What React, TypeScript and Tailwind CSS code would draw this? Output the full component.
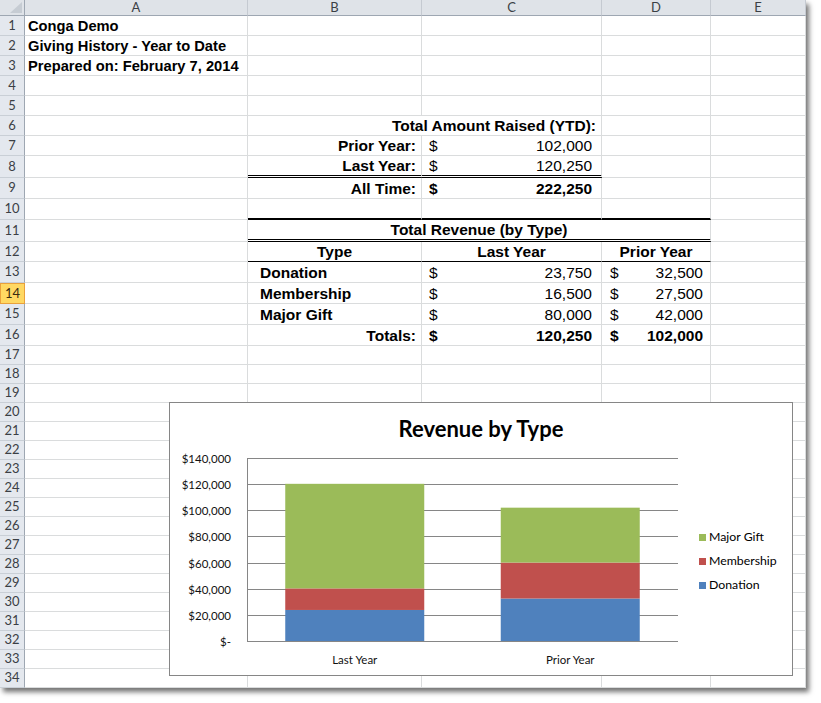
import React from "react";

// column widths (each includes its own 1px right gridline)
const W = {
  A: "w-[223px]",
  B: "w-[174px]",
  C: "w-[180px]",
  D: "w-[109px]",
  E: "w-[95px]",
  BC: "w-[354px]",
  BD: "w-[463px]",
};

const Cell: React.FC<{ w: string; className?: string; children?: React.ReactNode }> = ({
  w,
  className = "",
  children,
}) => (
  <div
    className={`${w} shrink-0 box-border h-full border-r border-b border-[#dadcdd] flex items-end pb-[1px] leading-[16px] whitespace-nowrap ${className}`}
  >
    {children}
  </div>
);

const Row: React.FC<{ n: number; h: string; active?: boolean; children?: React.ReactNode }> = ({
  n,
  h,
  active,
  children,
}) => (
  <div className={`flex ${h}`}>
    <div
      className={`w-[25px] shrink-0 h-full box-border flex items-center justify-center font-['Lato',sans-serif] text-[13px] ${
        active
          ? "bg-[#ffd862] border border-[#e9a13b] text-[#3a2a10]"
          : "bg-[#e4e8ee] border-r border-b border-r-[#9ea7b2] border-b-[#c9cfd6] text-[#3b3f45]"
      }`}
    >
      {n}
    </div>
    {children ?? (
      <>
        <Cell w={W.A} />
        <Cell w={W.B} />
        <Cell w={W.C} />
        <Cell w={W.D} />
        <Cell w={W.E} />
      </>
    )}
  </div>
);

// accounting-format cell: "$" on the left, figure on the right
const Money: React.FC<{ w: string; value: string; bold?: boolean; className?: string; pad?: string }> = ({
  w,
  value,
  bold,
  className = "",
  pad = "pl-[7px] pr-[9px]",
}) => (
  <Cell w={w} className={`justify-between ${pad} ${bold ? "font-bold" : ""} ${className}`}>
    <span>$</span>
    <span>{value}</span>
  </Cell>
);

const revenue = [
  { name: "Donation", color: "#4f81bd", last: 23750, prior: 32500 },
  { name: "Membership", color: "#c0504d", last: 16500, prior: 27500 },
  { name: "Major Gift", color: "#9bbb59", last: 80000, prior: 42000 },
];

const yLabels = ["$140,000", "$120,000", "$100,000", "$80,000", "$60,000", "$40,000", "$20,000", "$-"];

const Chart: React.FC = () => {
  const base = 192;
  const top = 9;
  const max = 140000;
  const scale = (base - top) / max;
  const left = 77;
  const right = 508;
  const catW = (right - left) / 2;
  const barW = 139;
  const cats: Array<"last" | "prior"> = ["last", "prior"];

  return (
    <div className="absolute left-[169px] top-[402px] w-[624px] h-[274px] border border-[#868686] bg-white flex flex-col font-['Lato',sans-serif] text-black">
      <div className="h-[46px] pt-[5px] flex items-center justify-center text-[22px] font-bold">
        Revenue by Type
      </div>
      <div className="flex flex-1">
        <svg width="520" height="226" className="shrink-0">
          {yLabels.map((label, i) => {
            const y = Math.round(top + (i * (base - top)) / 7) + 0.5;
            return (
              <g key={label}>
                <line x1={left} x2={right} y1={y} y2={y} stroke="#868686" strokeWidth="1" />
                <text x="61" y={y + 4} textAnchor="end" fontSize="11.5" fill="#111">
                  {label}
                </text>
              </g>
            );
          })}
          <line x1={left + 0.5} x2={left + 0.5} y1={top} y2={base + 1} stroke="#868686" strokeWidth="1" />
          {cats.map((c, ci) => {
            const x = left + catW * ci + (catW - barW) / 2;
            let acc = 0;
            return (
              <g key={c}>
                {revenue.map((r) => {
                  const h = r[c] * scale;
                  const y = base - (acc + r[c]) * scale;
                  acc += r[c];
                  return <rect key={r.name} x={x} y={y} width={barW} height={h} fill={r.color} />;
                })}
                <text x={left + catW * ci + catW / 2} y="215" textAnchor="middle" fontSize="11.5" fill="#111">
                  {c === "last" ? "Last Year" : "Prior Year"}
                </text>
              </g>
            );
          })}
        </svg>
        <div className="flex flex-col justify-center pl-[9px] pb-[2px] text-[12.3px]">
          {[...revenue].reverse().map((r) => (
            <div key={r.name} className="h-[24px] flex items-center gap-[3px]">
              <span className={`w-[7px] h-[7px] ${r.name === "Donation" ? "bg-[#4f81bd]" : r.name === "Membership" ? "bg-[#c0504d]" : "bg-[#9bbb59]"}`} />
              <span>{r.name}</span>
            </div>
          ))}
        </div>
      </div>
    </div>
  );
};

export default function App() {
  const bold = "font-bold";
  const title = "text-[14.7px] font-bold pl-[3px]";
  const label = "justify-end pr-[5px] font-bold";
  const blankRows = Array.from({ length: 18 }, (_, i) => 17 + i);

  return (
    <div className="relative w-[821px] h-[703px] bg-white overflow-hidden">
      <div className="relative w-[806px] bg-white shadow-[3px_4px_5px_rgba(0,0,0,0.55)] font-['Liberation_Sans',Arial,sans-serif] text-[15.5px] text-black">
        {/* column headers */}
        <div className="flex h-[16px] bg-[#dfe3e8] font-['Lato',sans-serif] text-[13px] text-[#3b3f45]">
          <div className="w-[25px] shrink-0 box-border border-r border-b border-r-[#9ea7b2] border-b-[#9ea7b2] relative">
            <svg width="24" height="15" className="absolute left-0 top-0">
              <polygon points="10,13 22,13 22,2" fill="#c6ccd3" />
            </svg>
          </div>
          {[
            ["A", W.A],
            ["B", W.B],
            ["C", W.C],
            ["D", W.D],
            ["E", W.E],
          ].map(([l, w]) => (
            <div
              key={l}
              className={`${w} shrink-0 box-border border-r border-b border-r-[#c5cad1] border-b-[#9ea7b2] flex items-center justify-center leading-none`}
            >
              {l}
            </div>
          ))}
        </div>

        <Row n={1} h="h-[20px]">
          <Cell w={W.A} className={title}>Conga Demo</Cell>
          <Cell w={W.B} />
          <Cell w={W.C} />
          <Cell w={W.D} />
          <Cell w={W.E} />
        </Row>
        <Row n={2} h="h-[20px]">
          <Cell w={W.A} className={title}>Giving History - Year to Date</Cell>
          <Cell w={W.B} />
          <Cell w={W.C} />
          <Cell w={W.D} />
          <Cell w={W.E} />
        </Row>
        <Row n={3} h="h-[20px]">
          <Cell w={W.A} className={title}>Prepared on: February 7, 2014</Cell>
          <Cell w={W.B} />
          <Cell w={W.C} />
          <Cell w={W.D} />
          <Cell w={W.E} />
        </Row>
        <Row n={4} h="h-[20px]" />
        <Row n={5} h="h-[20px]" />
        <Row n={6} h="h-[20px]">
          <Cell w={W.A} />
          <Cell w={W.BC} className={label}>Total Amount Raised (YTD):</Cell>
          <Cell w={W.D} />
          <Cell w={W.E} />
        </Row>
        <Row n={7} h="h-[20px]">
          <Cell w={W.A} />
          <Cell w={W.B} className={label}>Prior Year:</Cell>
          <Money w={W.C} value="102,000" />
          <Cell w={W.D} />
          <Cell w={W.E} />
        </Row>
        <Row n={8} h="h-[22px]">
          <Cell w={W.A} />
          <Cell w={W.B} className={`${label} border-double border-b-[3px] border-b-black`}>Last Year:</Cell>
          <Money w={W.C} value="120,250" className="border-double border-b-[3px] border-b-black" />
          <Cell w={W.D} />
          <Cell w={W.E} />
        </Row>
        <Row n={9} h="h-[21px]">
          <Cell w={W.A} />
          <Cell w={W.B} className={label}>All Time:</Cell>
          <Money w={W.C} value="222,250" bold />
          <Cell w={W.D} />
          <Cell w={W.E} />
        </Row>
        <Row n={10} h="h-[21px]">
          <Cell w={W.A} />
          <Cell w={W.B} className="border-b-2 border-b-black" />
          <Cell w={W.C} className="border-b-2 border-b-black" />
          <Cell w={W.D} className="border-b-2 border-b-black" />
          <Cell w={W.E} />
        </Row>
        <Row n={11} h="h-[22px]">
          <Cell w={W.A} />
          <Cell w={W.BD} className={`justify-center ${bold} border-double border-b-[3px] border-b-black`}>
            Total Revenue (by Type)
          </Cell>
          <Cell w={W.E} />
        </Row>
        <Row n={12} h="h-[20px]">
          <Cell w={W.A} />
          <Cell w={W.B} className={`justify-center ${bold} border-b-black`}>Type</Cell>
          <Cell w={W.C} className={`justify-center ${bold} border-b-black`}>Last Year</Cell>
          <Cell w={W.D} className={`justify-center ${bold} border-b-black`}>Prior Year</Cell>
          <Cell w={W.E} />
        </Row>
        {revenue.map((r, i) => (
          <Row key={r.name} n={13 + i} h="h-[21px]" active={i === 1}>
            <Cell w={W.A} />
            <Cell w={W.B} className={`pl-[12px] ${bold}`}>{r.name}</Cell>
            <Money w={W.C} value={r.last.toLocaleString("en-US")} />
            <Money w={W.D} value={r.prior.toLocaleString("en-US")} pad="pl-[8px] pr-[7px]" />
            <Cell w={W.E} />
          </Row>
        ))}
        <Row n={16} h="h-[21px]">
          <Cell w={W.A} />
          <Cell w={W.B} className={label}>Totals:</Cell>
          <Money w={W.C} value="120,250" bold />
          <Money w={W.D} value="102,000" bold pad="pl-[8px] pr-[7px]" />
          <Cell w={W.E} />
        </Row>
        {blankRows.map((n) => (
          <Row key={n} n={n} h="h-[19px]" />
        ))}

        <Chart />
      </div>
    </div>
  );
}
